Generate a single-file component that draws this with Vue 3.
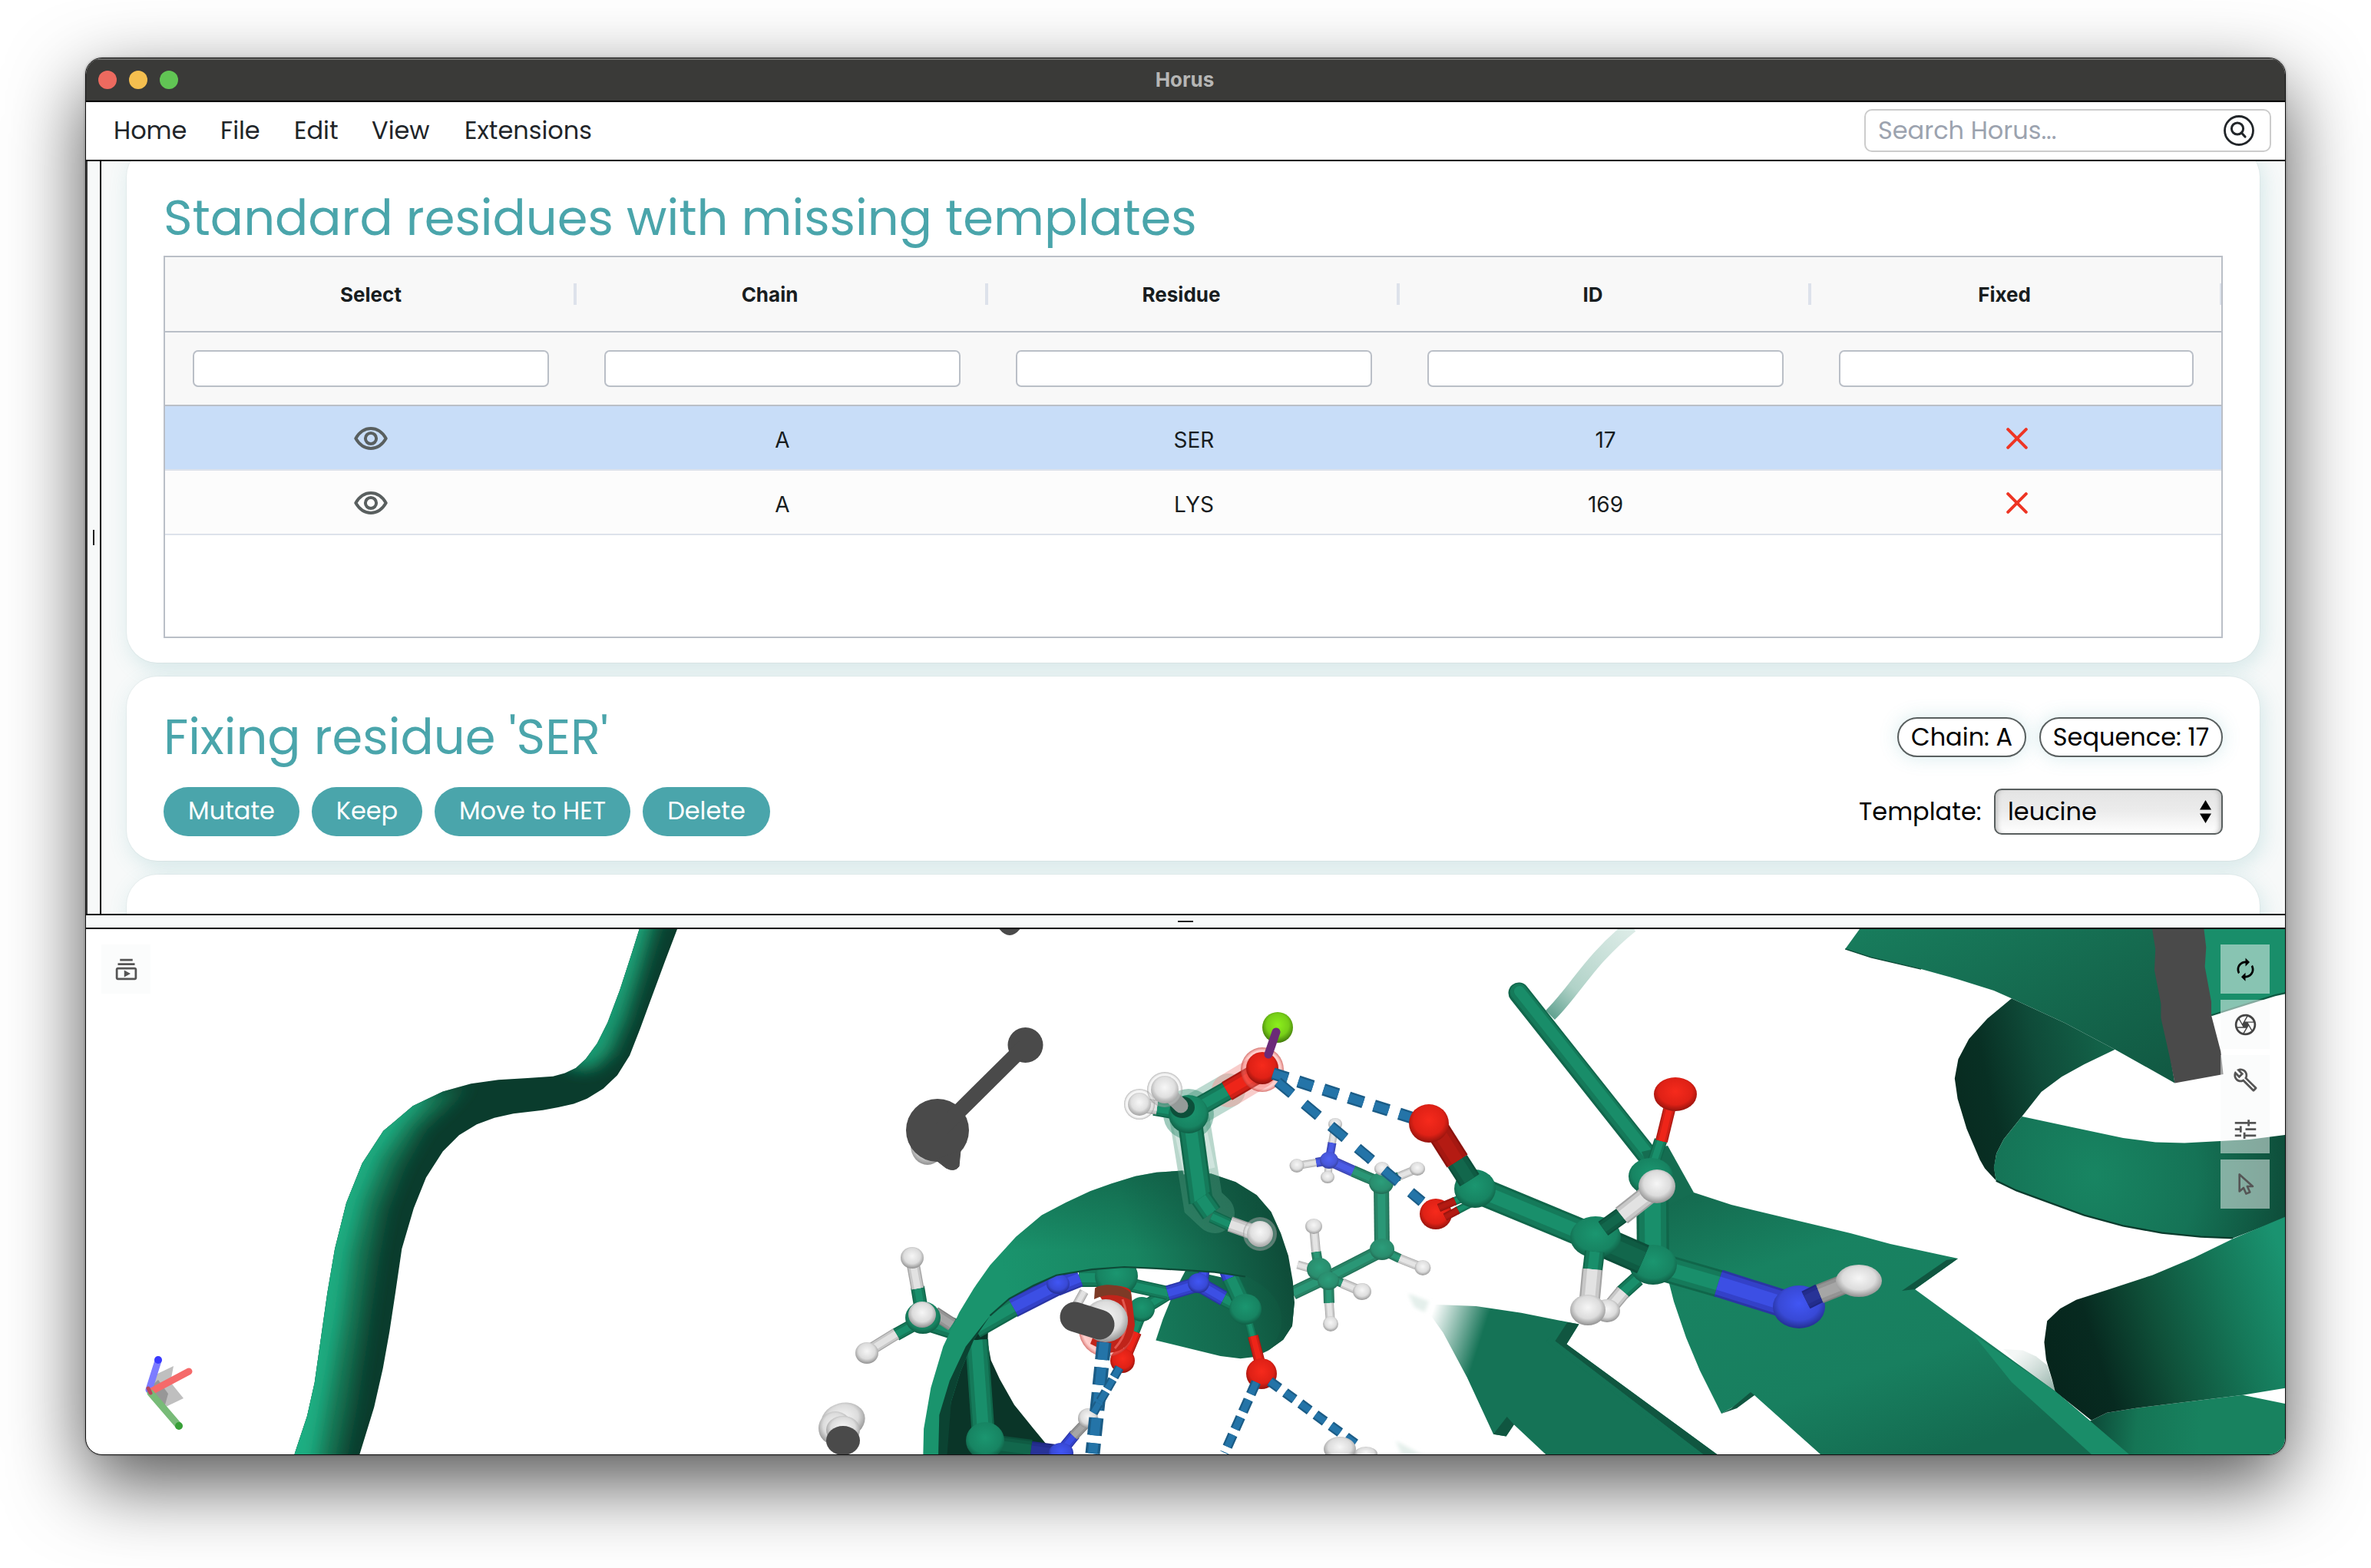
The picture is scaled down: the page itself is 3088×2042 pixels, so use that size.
<script setup>
const menu = [
  { label: 'Home', w: 93 },
  { label: 'File', w: 50 },
  { label: 'Edit', w: 55 },
  { label: 'View', w: 75 },
  { label: 'Extensions', w: 165 },
]
const columns = ['Select', 'Chain', 'Residue', 'ID', 'Fixed']
const rows = [
  { chain: 'A', residue: 'SER', id: '17', selected: true },
  { chain: 'A', residue: 'LYS', id: '169', selected: false },
]
const actions = [
  { label: 'Mutate', w: 177 },
  { label: 'Keep', w: 144 },
  { label: 'Move to HET', w: 255 },
  { label: 'Delete', w: 166 },
]

// each stick is drawn in three coats, from the dark rim to the lit middle
const coats = [1, 0.84, 0.5]
const shade = {
  g: ['#10664a', '#157a5a', '#198f6b'],
  d: ['#0c4f3a', '#0f5b43', '#12674c'],
  r: ['#a81811', '#cf2017', '#ee2519'],
  m: ['#8c130e', '#a51811', '#b41b13'],
  b: ['#2a35a4', '#3341c8', '#3c4fe4'],
  n: ['#1e277f', '#232d8c', '#283397'],
  w: ['#a4a4a4', '#c8c8c8', '#e2e2e2'],
  s: ['#808080', '#949494', '#a6a6a6'],
}

// bonds: x1, y1, x2, y2, width, colour — atoms: x, y, rx, ry, colour
const backBonds = [
  [1684, 1684, 1730, 1662, 18, 'g'], [1730, 1664, 1800, 1628, 18, 'g'], [1800, 1628, 1799, 1541, 20, 'g'],
  [1799, 1541, 1762, 1525, 15, 'g'], [1762, 1525, 1731, 1511, 15, 'b'], [1731, 1511, 1714, 1514, 12, 'b'],
  [1714, 1514, 1690, 1518, 10, 'w'], [1731, 1511, 1735, 1488, 11, 'b'], [1735, 1488, 1739, 1463, 10, 'w'],
  [1731, 1515, 1729, 1534, 10, 'w'], [1799, 1541, 1822, 1532, 12, 'g'], [1822, 1532, 1846, 1522, 11, 'w'],
  [1800, 1541, 1800, 1522, 12, 'w'], [1800, 1628, 1823, 1639, 12, 'g'], [1823, 1639, 1853, 1651, 12, 'w'],
  [1718, 1653, 1714, 1630, 13, 'g'], [1714, 1630, 1711, 1597, 12, 'w'], [1730, 1664, 1748, 1671, 12, 'g'],
  [1748, 1671, 1774, 1682, 13, 'w'], [1730, 1666, 1731, 1697, 14, 'g'], [1731, 1697, 1733, 1724, 12, 'w'],
  [1718, 1655, 1690, 1647, 11, 'w'], [1720, 1655, 1730, 1668, 22, 'g'],
]
const backAtoms = [
  [1731, 1511, 12, 11, 'b'], [1689, 1518, 9.5, 9, 'w'], [1739, 1464, 9, 8, 'w'], [1729, 1533, 9, 8, 'w'],
  [1799, 1541, 16, 14, 'g'], [1846, 1522, 10, 9, 'w'], [1800, 1522, 10, 9, 'w'], [1800, 1627, 16, 14, 'g'],
  [1853, 1651, 10.5, 10, 'w'], [1718, 1653, 16, 15, 'g'], [1730, 1668, 14, 12, 'g'], [1711, 1597, 11, 10, 'w'],
  [1774, 1682, 12, 11, 'w'], [1733, 1724, 10, 10, 'w'],
]
const innerBonds = [
  [1487, 1705, 1521, 1684, 18, 'g'], [1453, 1669, 1521, 1684, 18, 'g'], [1521, 1684, 1561, 1672, 20, 'b'],
  [1561, 1672, 1594, 1691, 20, 'b'], [1594, 1691, 1622, 1705, 20, 'g'], [1566, 1672, 1569, 1650, 14, 'b'],
  [1598, 1655, 1603, 1668, 20, 'b'], [1603, 1664, 1622, 1705, 24, 'g'], [1624, 1712, 1632, 1742, 11, 'g'],
  [1632, 1740, 1641, 1775, 14, 'r'], [1487, 1710, 1475, 1740, 14, 'g'], [1480, 1735, 1466, 1768, 14, 'r'],
  [1405, 1664, 1453, 1664, 24, 'g'], [1376, 1676, 1406, 1664, 24, 'b'], [1376, 1674, 1319, 1703, 27, 'b'],
  [1319, 1702, 1270, 1730, 27, 'g'],
  [1272, 1745, 1281, 1872, 30, 'g'], [1283, 1880, 1343, 1888, 26, 'd'], [1343, 1888, 1382, 1893, 22, 'n'],
  [1382, 1890, 1400, 1868, 15, 'b'], [1398, 1870, 1420, 1847, 14, 's'], [1412, 1682, 1402, 1700, 12, 'w'],
]
const innerAtoms = [
  [1378, 1672, 15, 13, 'b'], [1487, 1705, 17, 16, 'g'], [1561, 1671, 14, 13, 'b'], [1622, 1705, 21, 20, 'g'],
  [1643, 1789, 20, 20, 'r'], [1462, 1772, 16, 16, 'r'], [1283, 1876, 25, 24, 'g'], [1382, 1892, 16, 13, 'b'],
  [1417, 1847, 13, 13, 'w'], [1454, 1662, 28, 26, 'g'],
]
const leftBonds = [
  [1203, 1718, 1250, 1733, 28, 'g'], [1217, 1710, 1240, 1725, 18, 's'], [1201, 1712, 1195, 1676, 18, 'g'],
  [1195, 1678, 1189, 1645, 17, 'w'], [1203, 1718, 1167, 1738, 17, 'g'], [1167, 1737, 1133, 1758, 16, 'w'],
]
const leftAtoms = [
  [1202, 1716, 23, 21, 'g'], [1188, 1638, 15, 14, 'w'], [1201, 1712, 18, 17, 'w'], [1129, 1762, 15, 14, 'w'],
]
const serBonds = [
  [1546, 1450, 1599, 1420, 25, 'g'], [1598, 1421, 1644, 1394, 27, 'r'], [1549, 1455, 1564, 1566, 32, 'g'],
  [1564, 1560, 1578, 1580, 28, 'g'], [1578, 1584, 1602, 1595, 17, 'g'], [1602, 1594, 1636, 1606, 20, 'w'],
  [1546, 1450, 1503, 1443, 20, 'g'], [1507, 1442, 1484, 1439, 19, 'w'],
]
const serAtoms = [
  [1548, 1451, 26, 25, 'g'], [1644, 1391, 21, 21, 'r'], [1484, 1438, 15, 15, 'w'], [1641, 1607, 17, 17, 'w'],
]
const frontBonds = [
  [2153, 1647, 2152, 1532, 42, 'g'], [2150, 1525, 2163, 1485, 17, 'g'], [2164, 1486, 2174, 1445, 16, 'r'],
  [2133, 1665, 2112, 1684, 20, 'g'], [2114, 1682, 2094, 1706, 20, 'w'],
  [2153, 1647, 2240, 1672, 36, 'g'], [2238, 1671, 2330, 1700, 36, 'b'],
]
const frontAtoms = [
  [2150, 1532, 29, 24, 'g'], [2182, 1425, 28, 22, 'r'], [2093, 1707, 17, 15, 'w'], [2153, 1647, 31, 26, 'g'],
  [1870, 1581, 21, 20, 'r'], [2343, 1702, 34, 28, 'b'],
]
const midBonds = [
  [2078, 1613, 2140, 1640, 40, 'd'], [1921, 1548, 2078, 1613, 36, 'g'],
  [1912, 1557, 1893, 1565, 11, 'g'], [1895, 1564, 1874, 1573, 11, 'm'],
  [1916, 1567, 1897, 1577, 10, 'g'], [1899, 1576, 1882, 1585, 10, 'm'],
]
const midAtoms = [[1921, 1548, 27, 25, 'g'], [2078, 1611, 33, 27, 'g']]
const nearBonds = [
  [1914, 1537, 1898, 1512, 30, 'd'], [1898, 1512, 1872, 1471, 32, 'm'],
  [2088, 1600, 2113, 1582, 22, 'd'], [2112, 1583, 2150, 1553, 26, 'w'], [2077, 1630, 2074, 1655, 26, 'g'],
  [2074, 1653, 2070, 1696, 27, 'w'], [2352, 1693, 2370, 1684, 25, 'n'], [2370, 1685, 2405, 1671, 26, 's'],
]
const nearAtoms = [
  [1861, 1463, 26, 25, 'r'], [2158, 1545, 24, 22, 'w'], [2068, 1706, 23, 20, 'w'], [2421, 1668, 30, 21, 'w'],
]

const inner = [
  { key: 'inner', bonds: innerBonds, atoms: innerAtoms },
  { key: 'left', bonds: leftBonds, atoms: leftAtoms },
]
const front = [
  { key: 'front', bonds: frontBonds, atoms: frontAtoms },
  { key: 'mid', bonds: midBonds, atoms: midAtoms },
  { key: 'near', bonds: nearBonds, atoms: nearAtoms },
]
const dashes = [
  [1658, 1398, 1840, 1456, 16, '20 14.5'],
  [1664, 1409, 1852, 1565, 14, '24 21'],
]
const dashes2 = [
  [1438, 1748, 1423, 1893, 19, '23 10'],
  [1458, 1781, 1424, 1840, 12, '14 4'],
  [1636, 1800, 1595, 1892, 13, '17 8'],
  [1654, 1799, 1772, 1885, 13, '15 9.5'],
]
</script>

<template>
  <div class="desktop">
    <div class="window">
      <header class="titlebar">
        <div class="lights"><i class="close"></i><i class="min"></i><i class="max"></i></div>
        <span class="title">Horus</span>
      </header>

      <nav class="menubar">
        <div class="menu">
          <span v-for="m in menu" :key="m.label" class="menu-item" :style="{ width: m.w + 'px' }">{{ m.label }}</span>
        </div>
        <div class="search">
          <span>Search Horus...</span>
          <svg width="40" height="40" viewBox="0 0 40 40" fill="none" stroke="#212529" stroke-linecap="round">
            <circle cx="20" cy="20" r="18.5" stroke-width="2.8" />
            <circle cx="18" cy="17.5" r="7.6" stroke-width="3" />
            <path d="M23.3 23 28 28" stroke-width="3.200" />
          </svg>
        </div>
      </nav>

      <section class="upper">
        <div class="rail"><i></i></div>
        <div class="panel">
          <article class="card first">
            <h2>Standard residues with missing templates</h2>
            <div class="grid">
              <div class="row head">
                <div v-for="(c, i) in columns" :key="c" class="cell" :class="{ shifted: i > 0 }">
                  <span>{{ c }}</span><i class="sep"></i>
                </div>
              </div>
              <div class="row filters">
                <div v-for="c in columns" :key="c" class="cell"><div class="filter"></div></div>
              </div>
              <div v-for="r in rows" :key="r.id" class="row data" :class="{ selected: r.selected }">
                <div class="cell icon">
                  <svg width="44" height="30" viewBox="0 0 44 30" fill="none" stroke="#595f5f" stroke-width="4">
                    <path d="M2.300 15C7 7 14 2.100 22 2.100S37 7 41.700 15C37 23 30 27.900 22 27.900S7 23 2.300 15Z" stroke-linejoin="round" />
                    <circle cx="22" cy="15" r="7.100" />
                  </svg>
                </div>
                <div class="cell txt">{{ r.chain }}</div>
                <div class="cell txt">{{ r.residue }}</div>
                <div class="cell txt">{{ r.id }}</div>
                <div class="cell icon">
                  <svg width="28" height="28" viewBox="0 0 28 28" stroke="#ee3524" stroke-width="4" stroke-linecap="round">
                    <path d="M2.200 2.200 25.800 25.800M25.800 2.200 2.200 25.800" />
                  </svg>
                </div>
              </div>
            </div>
          </article>

          <article class="card second">
            <div class="line">
              <h2>Fixing residue 'SER'</h2>
              <div class="badges">
                <span class="badge chain">Chain: A</span>
                <span class="badge seq">Sequence: 17</span>
              </div>
            </div>
            <div class="line actions">
              <div class="buttons">
                <span v-for="a in actions" :key="a.label" class="btn" :style="{ width: a.w + 'px' }">{{ a.label }}</span>
              </div>
              <div class="template">
                <span class="tpl-label">Template:</span>
                <div class="select">
                  <span>leucine</span>
                  <svg width="15" height="30" viewBox="0 0 15 30"><path d="M7.500 0 15 12.500H0ZM7.500 30 0 17.500H15Z" /></svg>
                </div>
              </div>
            </div>
          </article>

          <article class="card third"></article>
        </div>
      </section>

      <div class="splitter"><i></i></div>

      <section class="viewer">
        <svg class="scene" viewBox="112 1210 2864 684" width="2864" height="684">
          <defs>
            <radialGradient id="ag" cx=".5" cy=".42" r=".6"><stop offset="0" stop-color="#1b9670" /><stop offset=".7" stop-color="#178462" /><stop offset="1" stop-color="#0f5a42" /></radialGradient>
            <radialGradient id="ar" cx=".5" cy=".42" r=".6"><stop offset="0" stop-color="#f62a1c" /><stop offset=".65" stop-color="#df2116" /><stop offset="1" stop-color="#8c120c" /></radialGradient>
            <radialGradient id="ab" cx=".5" cy=".42" r=".6"><stop offset="0" stop-color="#4156f4" /><stop offset=".65" stop-color="#3849d6" /><stop offset="1" stop-color="#212c8a" /></radialGradient>
            <radialGradient id="aw" cx=".5" cy=".42" r=".6"><stop offset="0" stop-color="#f6f6f6" /><stop offset=".6" stop-color="#dcdcdc" /><stop offset="1" stop-color="#8a8a8a" /></radialGradient>
            <radialGradient id="al" cx=".5" cy=".42" r=".6"><stop offset="0" stop-color="#8cf01c" /><stop offset=".6" stop-color="#77cf18" /><stop offset="1" stop-color="#3d720a" /></radialGradient>
            <radialGradient id="halo" cx=".5" cy=".5" r=".5"><stop offset=".6" stop-color="#fff" stop-opacity=".1" /><stop offset=".88" stop-color="#d8d8d8" stop-opacity=".35" /><stop offset="1" stop-color="#888" stop-opacity=".6" /></radialGradient>
            <radialGradient id="haloRed" cx=".5" cy=".5" r=".5"><stop offset=".5" stop-color="#ff3a30" stop-opacity=".35" /><stop offset=".85" stop-color="#ff8a84" stop-opacity=".4" /><stop offset="1" stop-color="#c53a34" stop-opacity=".7" /></radialGradient>
            <linearGradient id="topArrow" x1="0" y1="0" x2="1" y2="1"><stop offset="0" stop-color="#187d5d" /><stop offset=".5" stop-color="#156a4f" /><stop offset="1" stop-color="#115842" /></linearGradient>
            <linearGradient id="coilB" gradientUnits="userSpaceOnUse" x1="500" y1="500" x2="960" y2="390"><stop offset="0" stop-color="#082c21" /><stop offset=".2" stop-color="#083024" /><stop offset=".55" stop-color="#0f4b39" /><stop offset="1" stop-color="#136349" /></linearGradient>
            <radialGradient id="coilB2" gradientUnits="userSpaceOnUse" cx="920" cy="740" r="640"><stop offset="0" stop-color="#188562" /><stop offset=".5" stop-color="#157356" /><stop offset="1" stop-color="#0d4836" /></radialGradient>
            <linearGradient id="coilC" gradientUnits="userSpaceOnUse" x1="770" y1="1260" x2="1511" y2="1000"><stop offset="0" stop-color="#06251c" /><stop offset=".2" stop-color="#072a20" /><stop offset=".45" stop-color="#0f5039" /><stop offset=".75" stop-color="#157758" /><stop offset="1" stop-color="#1a9370" /></linearGradient>
            <linearGradient id="coilD" gradientUnits="userSpaceOnUse" x1="920" y1="1440" x2="1250" y2="1470"><stop offset="0" stop-color="#0d4d3a" /><stop offset=".4" stop-color="#157555" /><stop offset="1" stop-color="#18825f" /></linearGradient>
            <linearGradient id="bigArrow" x1="0" y1="0" x2=".6" y2="1"><stop offset="0" stop-color="#14694e" /><stop offset=".3" stop-color="#188261" /><stop offset=".7" stop-color="#187f5f" /><stop offset="1" stop-color="#146b50" /></linearGradient>
            <linearGradient id="fadeArrow" gradientUnits="userSpaceOnUse" x1="370" y1="1190" x2="500" y2="1225"><stop offset="0" stop-color="#16765a" stop-opacity="0" /><stop offset="1" stop-color="#157356" /></linearGradient>
            <linearGradient id="fadeTube" gradientUnits="userSpaceOnUse" x1="2020" y1="1320" x2="2120" y2="1210"><stop offset="0" stop-color="#4a9480" stop-opacity=".85" /><stop offset=".3" stop-color="#8fbfb0" stop-opacity=".7" /><stop offset="1" stop-color="#c4ded6" stop-opacity=".6" /></linearGradient>
            <linearGradient id="ghost" gradientUnits="userSpaceOnUse" x1="700" y1="1230" x2="790" y2="1340"><stop offset="0" stop-color="#e8efec" stop-opacity=".5" /><stop offset="1" stop-color="#9db8b0" /></linearGradient>
            <linearGradient id="helix" gradientUnits="userSpaceOnUse" x1="600" y1="1080" x2="1480" y2="850"><stop offset="0" stop-color="#1a946d" /><stop offset=".45" stop-color="#188561" /><stop offset=".75" stop-color="#136249" /><stop offset="1" stop-color="#0d4634" /></linearGradient>
            <linearGradient id="helixTop" gradientUnits="userSpaceOnUse" x1="0" y1="727" x2="0" y2="960"><stop offset="0" stop-color="#0e513c" stop-opacity=".5" /><stop offset="1" stop-color="#0e513c" stop-opacity="0" /></linearGradient>
            <linearGradient id="helixBack" gradientUnits="userSpaceOnUse" x1="1060" y1="1220" x2="1480" y2="1120"><stop offset="0" stop-color="#16795a" /><stop offset=".6" stop-color="#13674c" /><stop offset="1" stop-color="#0f523c" /></linearGradient>
            <filter id="soft" x="-30%" y="-30%" width="160%" height="160%"><feGaussianBlur stdDeviation="20" /></filter>
            <filter id="soft4" x="-30%" y="-30%" width="160%" height="160%"><feGaussianBlur stdDeviation="5" /></filter>
            <clipPath id="tubeClip"><path d="M1294 43 1276 115 1250 215 1222 308 1198 368 1172 412 1150 437 1125 452 1098 461 1040 466 974 471 912 482 848 504 780 545 713 616 665 708 629 820 603 950 586 1075 570 1215 557 1330 540 1425 511 1534H659L692 1400 712 1290 727 1185 741 1070 755 950 782 835 810 748 848 674 885 628 925 597 965 579 1008 567 1075 557 1110 549 1145 539 1176 524 1212 496 1244 458 1272 402 1296 325 1318 250 1352 135 1380 43Z" /></clipPath>
          </defs>

          <!-- loop on the left -->
          <g transform="translate(90 1190) scale(.57398 .45918)">
            <g clip-path="url(#tubeClip)">
              <rect x="480" y="40" width="920" height="1500" fill="#0a3c2d" />
              <path filter="url(#soft)" fill="#14704f" d="M1270 0 1222 308 1172 412 1140 445 1190 445 1235 400 1270 300 1300 180 1345 0ZM900 480 780 530 700 610 650 708 610 820 590 950 560 1215 480 1580H612L640 1400 665 1200 690 980 712 840 750 720 800 610 860 540Z" />
              <path filter="url(#soft)" fill="#1fae82" d="M1240 0 1200 300 1150 412 1120 440 1180 430 1215 385 1245 300 1280 160 1315 0ZM840 480 760 520 680 600 630 708 590 820 565 950 540 1215 450 1580H560L595 1330 620 1150 640 960 670 810 710 690 760 600 800 545Z" />
            </g>
          </g>

          <!-- sheets and coils on the right -->
          <path d="M2019 1322C2050 1292 2070 1250 2125 1206" fill="none" stroke="url(#fadeTube)" stroke-width="17" />
          <g transform="translate(2340 1190) scale(.42092 .45918)">
            <path fill="url(#coilB)" d="M665 240 590 297 533 355 500 412 489 467 498 525 526 610 567 698 582 722 617 757 611 720 618 680 640 640 697 575 757 505 820 462 890 427 985 385 830 310Z" />
            <path fill="url(#coilB2)" d="M697 575 850 605 1010 636 1110 648 1200 650 1400 640 1515 627V862L1350 920 1250 916 1130 905 1010 885 890 855 800 825 680 785 617 757 610 720 618 680 640 640Z" />
            <path fill="none" stroke="#0a3c2d" stroke-width="5" d="M617 757 680 785 800 825 890 855 1010 885 1130 905 1250 916 1350 920" />
            <path fill="url(#topArrow)" d="M195 43H1104L1112 100 1109 160 1130 255V295L1157 410 1170 480 985 385 830 310 665 240 610 218 500 186 385 157 230 124 150 100Z" />
            <path fill="none" stroke="#0c4a36" stroke-width="3" d="M150 100 230 124 385 157" />
            <path fill="#198e6a" d="M1258 43H1515V225L1480 232 1400 255 1283 288 1280 250 1260 150Z" />
            <path fill="none" stroke="#0f5a43" stroke-width="5" d="M1515 224 1480 231 1400 254 1283 288" />
            <path fill="#4a4a4a" d="M1100 43H1260L1267 95 1263 150 1283 250V288L1312 390 1320 455 1170 480 1155 410 1127 295V255L1107 160 1110 100Z" />
            <path fill="url(#ghost)" d="M640 1235 700 1238 740 1255 775 1280 802 1358 700 1290Z" />
            <path fill="url(#coilD)" d="M905 1440 960 1415 1050 1402 1200 1385 1380 1365 1515 1390V1540H1030Z" />
            <path fill="url(#coilC)" d="M1515 858 1350 922 1230 975 1100 1025 960 1067 865 1095 815 1120 775 1155 766 1215 772 1265 790 1320 800 1355 912 1437 960 1415 1050 1402 1200 1385 1380 1365 1515 1345Z" />
          </g>
          <path d="M1978 1293 2164 1528" stroke="#11674c" stroke-width="27" stroke-linecap="round" />
          <path d="M1978 1292 2164 1527" stroke="#157a5a" stroke-width="22" stroke-linecap="round" />
          <path d="M1979 1291 2165 1526" stroke="#198d69" stroke-width="14" stroke-linecap="round" />
          <path fill="#156d51" d="M2138 1500 2172 1492 2206 1553 2180 1600Z" />
          <path fill="url(#bigArrow)" d="M2206 1553 2255 1569 2330 1587 2410 1606 2462 1620 2550 1639 2494 1679 2677 1812 2773 1894H2371L2285 1817 2242 1841 2214 1785 2196 1742 2180 1695 2171 1660V1570Z" />
          <path fill="#1a8d69" d="M2570 1738 2677 1812 2773 1894H2724L2620 1800Z" />
          <path fill="#105640" d="M2550 1639 2494 1679 2477 1681 2535 1641ZM2285 1817 2280 1813 2255 1834 2242 1841 2262 1834Z" />
          <g transform="translate(1660 1200) scale(.53571 .44643)">
            <path fill="url(#fadeArrow)" d="M360 1116 490 1122 600 1142 740 1175 710 1233 1082 1560H664L582 1468 563 1502 532 1496 468 1330 410 1200Z" />
            <path fill="#105640" d="M740 1175 710 1233 1082 1560H1048L682 1224 712 1169ZM582 1468 563 1502 532 1496 565 1445Z" />
            <path fill="#157356" d="M670 1212 682 1224 1048 1560H1030L660 1225Z" />
            <path filter="url(#soft4)" fill="#e4efeb" d="M325 1085 375 1108 365 1140 340 1125ZM295 1515 365 1560H310Z" />
          </g>

          <!-- side chain in the distance -->
          <g opacity=".92">
            <g v-for="(b, i) in backBonds" :key="'bb' + i">
              <line v-for="(k, n) in coats" :key="n" :x1="b[0]" :y1="b[1]" :x2="b[2]" :y2="b[3]" :stroke-width="b[4] * k" :stroke="shade[b[5]][n]" />
            </g>
            <ellipse v-for="(a, i) in backAtoms" :key="'ba' + i" :cx="a[0]" :cy="a[1]" :rx="a[2]" :ry="a[3]" :fill="`url(#a${a[4]})`" />
          </g>

          <!-- helix, inner face -->
          <g transform="translate(1060 1200) scale(.42092 .44643)">
            <path fill="url(#helixBack)" d="M1150 1018 1335 1033 1400 1060 1487 1110 1480 1180 1452 1220 1405 1252 1365 1270 1320 1275 1258 1268 1058 1222 1080 1160 1110 1090Z" />
            <path fill="#0a3528" d="M385 1560 395 1450 420 1340 460 1240 540 1150 538 1230 548 1280 575 1335 620 1410 680 1480 750 1560Z" />
            <path fill="#fff" d="M1218 1018 1268 1024 1270 1040 1222 1030Z" />
          </g>

          <g v-for="l in inner" :key="l.key">
            <g v-for="(b, i) in l.bonds" :key="i">
              <line v-for="(k, n) in coats" :key="n" :x1="b[0]" :y1="b[1]" :x2="b[2]" :y2="b[3]" :stroke-width="b[4] * k" :stroke="shade[b[5]][n]" />
            </g>
            <ellipse v-for="(a, i) in l.atoms" :key="'a' + i" :cx="a[0]" :cy="a[1]" :rx="a[2]" :ry="a[3]" :fill="`url(#a${a[4]})`" />
          </g>

          <!-- helix, outer face -->
          <g transform="translate(1060 1200) scale(.42092 .44643)">
            <path fill="url(#helix)" d="M338 1560 340 1480 362 1360 400 1240 450 1140 495 1070 545 1003 625 920 705 857 780 820 855 787 920 765 995 743 1060 732 1140 727 1230 736 1305 760 1370 798 1415 847 1445 910 1468 975 1482 1050 1487 1110 1480 1180 1452 1220 1405 1252C1470 1190 1470 1090 1335 1035L1240 1022 1060 1012 960 1008 860 1015 750 1032 680 1062 605 1100 545 1150 495 1220 455 1310 425 1400 410 1480 408 1560Z" />
            <path fill="url(#helixTop)" d="M545 1003 625 920 705 857 780 820 855 787 920 765 995 743 1060 732 1140 727 1230 736 1305 760 1370 798 1415 847 1445 960H600Z" />
            <path fill="#0b4332" d="M385 1560 388 1440 420 1340 470 1240 545 1150 495 1220 455 1310 425 1400 412 1560Z" />
            <path fill="none" stroke="#0d4a37" stroke-width="5" d="M1335 1036 1240 1023 1060 1012 960 1008 860 1015 750 1032 680 1062 605 1100 545 1150" />
          </g>

          <!-- oxygen seen end-on, below the helix -->
          <ellipse cx="1441" cy="1731" rx="36" ry="36" fill="url(#haloRed)" />
          <path d="M1426 1678C1428 1672 1472 1672 1473 1682L1478 1725Q1474 1760 1444 1762L1420 1750 1440 1700Z" fill="#c0241a" />
          <path d="M1426 1678C1436 1670 1462 1672 1473 1684L1474 1694Q1450 1680 1425 1692Z" fill="#7d3a26" />
          <path d="M1462 1692Q1476 1730 1452 1756" fill="none" stroke="#e2584f" stroke-width="3" />
          <ellipse cx="1440" cy="1720" rx="29" ry="28" fill="url(#aw)" />
          <path d="M1400 1715 1432 1725" stroke="#4a4a4a" stroke-width="39" stroke-linecap="round" />

          <g v-for="(d, i) in dashes2" :key="'d2' + i" fill="none">
            <line :x1="d[0]" :y1="d[1]" :x2="d[2]" :y2="d[3]" stroke="#1b5c86" :stroke-width="d[4]" :stroke-dasharray="d[5]" />
            <line :x1="d[0]" :y1="d[1]" :x2="d[2]" :y2="d[3]" stroke="#2474a8" :stroke-width="d[4] * .65" :stroke-dasharray="d[5]" />
          </g>
          <ellipse cx="1745" cy="1887" rx="21" ry="16" fill="url(#aw)" />
          <ellipse cx="1779" cy="1893" rx="15" ry="9" fill="url(#aw)" />

          <!-- clipped dark atoms -->
          <ellipse cx="1208" cy="1492" rx="22" ry="25" fill="url(#aw)" />
          <g fill="#4a4a4a" stroke="#4a4a4a">
            <ellipse cx="1221" cy="1472" rx="41" ry="41" stroke="none" />
            <circle cx="1335.500" cy="1361" r="23" stroke="none" />
            <path d="M1226 1470 1334 1363" stroke-width="20" />
            <path d="M1218 1510 1232 1521Q1243 1527 1249 1519L1251 1498Z" />
            <path d="M1300 1208Q1315 1228 1330 1208Z" stroke="none" />
          </g>
          <ellipse cx="1098" cy="1850" rx="29" ry="23" fill="url(#aw)" transform="rotate(-15 1098 1850)" />
          <ellipse cx="1088" cy="1860" rx="22" ry="22" fill="url(#aw)" />
          <ellipse cx="1098" cy="1862" rx="22" ry="18" fill="url(#aw)" />
          <ellipse cx="1098" cy="1876" rx="22" ry="19" fill="#4a4a4a" />

          <!-- highlighted serine -->
          <g fill="none" stroke-linecap="round">
            <path d="M1548 1450 1600 1420" stroke="#7ab5a2" stroke-width="44" opacity=".5" />
            <path d="M1600 1420 1640 1396" stroke="#f29a95" stroke-width="44" opacity=".5" />
            <path d="M1549 1455 1567 1566 1582 1580" stroke="#4f9a80" stroke-width="52" opacity=".4" />
            <path d="M1549 1465 1562 1525" stroke="#e8f4ef" stroke-width="42" opacity=".5" stroke-linecap="butt" />
            <circle cx="1548" cy="1451" r="33" fill="#2b8a6a" opacity=".45" />
          </g>
          <g v-for="(b, i) in serBonds" :key="'sb' + i">
            <line v-for="(k, n) in coats" :key="n" :x1="b[0]" :y1="b[1]" :x2="b[2]" :y2="b[3]" :stroke-width="b[4] * k" :stroke="shade[b[5]][n]" />
          </g>
          <ellipse cx="1644" cy="1393" rx="28" ry="29" fill="url(#haloRed)" />
          <ellipse v-for="(a, i) in serAtoms" :key="'sa' + i" :cx="a[0]" :cy="a[1]" :rx="a[2]" :ry="a[3]" :fill="`url(#a${a[4]})`" />
          <ellipse cx="1540" cy="1442" rx="16" ry="14" fill="#0c4f3a" />
          <path d="M1520 1422 1538 1440" stroke="#959b99" stroke-width="19" stroke-linecap="round" />
          <circle cx="1484" cy="1438" r="20" fill="url(#halo)" />
          <circle cx="1517" cy="1419" r="18" fill="url(#aw)" />
          <circle cx="1517" cy="1419" r="23" fill="url(#halo)" />
          <circle cx="1641" cy="1607" r="22" fill="url(#halo)" />
          <circle cx="1664" cy="1338" r="20" fill="url(#al)" />
          <path d="M1662 1344 1652 1373" stroke="#6b2a78" stroke-width="11" stroke-linecap="round" />

          <g v-for="(d, i) in dashes" :key="'d' + i" fill="none">
            <line :x1="d[0]" :y1="d[1]" :x2="d[2]" :y2="d[3]" stroke="#1b5c86" :stroke-width="d[4]" :stroke-dasharray="d[5]" />
            <line :x1="d[0]" :y1="d[1]" :x2="d[2]" :y2="d[3]" stroke="#2474a8" :stroke-width="d[4] * .7" :stroke-dasharray="d[5]" />
          </g>

          <!-- residue in the foreground -->
          <g v-for="l in front" :key="l.key">
            <g v-for="(b, i) in l.bonds" :key="i">
              <line v-for="(k, n) in coats" :key="n" :x1="b[0]" :y1="b[1]" :x2="b[2]" :y2="b[3]" :stroke-width="b[4] * k" :stroke="shade[b[5]][n]" />
            </g>
            <ellipse v-for="(a, i) in l.atoms" :key="'a' + i" :cx="a[0]" :cy="a[1]" :rx="a[2]" :ry="a[3]" :fill="`url(#a${a[4]})`" />
          </g>

          <!-- axes -->
          <g stroke-linecap="round">
            <path d="M194 1811 203 1790 226 1779 222 1800 239 1821 214 1833Z" fill="#808080" opacity=".5" />
            <path d="M196 1806 206 1797 219 1815 214 1833 200 1822Z" fill="#707070" opacity=".5" />
            <path d="M194 1810 206 1772" stroke="#7c7cff" stroke-width="9" />
            <path d="M197 1812 246 1786" stroke="#f56a6a" stroke-width="9" />
            <path d="M196 1814 233 1857" stroke="#78bb78" stroke-width="9" />
            <circle cx="206" cy="1771" r="5" fill="#3a3aff" />
            <circle cx="233" cy="1857" r="5" fill="#38a038" />
            <path d="M193 1808 196 1814" stroke="#b8455c" stroke-width="5" />
          </g>
        </svg>

        <div class="tool-left">
          <svg width="33" height="33" viewBox="0 0 24 24" fill="#555"><path d="M20 8H4V6h16v2zm-2-6H6v2h12V2zm4 10v8c0 1.100-.9 2-2 2H4c-1.100 0-2-.9-2-2v-8c0-1.100.9-2 2-2h16c1.100 0 2 .9 2 2zm-2 0H4v8h16v-8zm-10 .730V19.270L16 16z" /></svg>
        </div>
        <div class="tools">
          <div class="tool"><svg width="33" height="33" viewBox="0 0 24 24"><path d="M12 6v3l4-4-4-4v3c-4.420 0-8 3.580-8 8 0 1.570.46 3.030 1.240 4.260L6.700 14.800c-.45-.83-.7-1.790-.7-2.800 0-3.310 2.690-6 6-6zm6.760 1.740L17.300 9.200c.44.84.7 1.790.7 2.800 0 3.310-2.690 6-6 6v-3l-4 4 4 4v-3c4.420 0 8-3.580 8-8 0-1.570-.46-3.030-1.240-4.260z" /></svg></div>
          <div class="tool">
            <svg width="33" height="33" viewBox="0 0 24 24" fill="#444"><path d="M14.250 2.260l-.08-.04-.01.02C13.460 2.090 12.740 2 12 2 6.480 2 2 6.480 2 12s4.480 10 10 10 10-4.480 10-10c0-4.750-3.310-8.720-7.750-9.740zM19.410 9h-7.990l2.710-4.700c2.400.66 4.350 2.420 5.280 4.700zM13.100 4.080L10.270 9l-1.150 2L6.400 6.300C7.840 4.880 9.820 4 12 4c.37 0 .74.030 1.100.080zM5.700 7.090L8.540 12l1.150 2H4.260C4.100 13.360 4 12.690 4 12c0-1.850.64-3.550 1.700-4.910zM4.590 15h7.980l-2.710 4.700c-2.400-.67-4.340-2.420-5.270-4.700zm6.310 4.910L14.890 13l2.720 4.700C16.160 19.120 14.180 20 12 20c-.38 0-.74-.040-1.100-.090zm7.400-3l-4-6.910h5.430c.17.640.27 1.310.27 2 0 1.850-.64 3.550-1.700 4.910z" /><circle cx="12" cy="12" r="2.800" /></svg>
          </div>
          <div class="tool tall">
            <svg width="33" height="33" viewBox="0 0 24 24" fill="#555"><path d="M22.610 18.990l-9.080-9.080c.93-2.340.45-5.100-1.440-7C9.790.610 6.210.400 3.660 2.260L7.500 6.110 6.080 7.520 2.250 3.690C.39 6.230.6 9.820 2.900 12.110c1.860 1.860 4.570 2.350 6.890 1.480l9.110 9.110c.39.39 1.020.39 1.410 0l2.300-2.300c.4-.38.4-1.010 0-1.410zm-3 1.600l-9.460-9.460c-.61.450-1.290.720-2 .820-1.360.2-2.790-.21-3.830-1.250C3.370 9.760 2.930 8.500 3 7.260l3.090 3.090 4.240-4.240-3.090-3.090c1.240-.07 2.490.37 3.440 1.310 1.080 1.080 1.490 2.570 1.240 3.960-.12.71-.42 1.370-.88 1.960l9.450 9.450-.88.890z" /></svg>
            <svg width="33" height="33" viewBox="0 0 24 24" fill="#555"><path d="M2 5h12v2H2zM16 5h6v2h-6zM14 3h2v6h-2zM2 11h6v2H2zM12 11h10v2H12zM6.500 9h2v6h-2zM2 17h6v2H2zM12 17h10v2H12zM10 15h2v6h-2z" /></svg>
          </div>
          <div class="tool">
            <svg width="33" height="33" viewBox="0 0 24 24" fill="none" stroke="#555" stroke-width="1.900" stroke-linejoin="round"><path d="M6.300 2.500v16l3.900-3.300 2.400 5.600 3.600-1.500-2.500-5.500h5.200Z" /></svg>
          </div>
        </div>
      </section>
    </div>
  </div>
</template>

<style>
html, body { margin: 0; background: #fff; }
</style>

<style scoped>
* { box-sizing: border-box; }
svg { display: block; flex: none; }
.desktop {
  width: 3088px; height: 2042px; padding: 75px 111px 0; overflow: hidden; background: #fff;
  font-family: Poppins, Inter, "Liberation Sans", sans-serif; font-size: 32px; color: #000;
}
.window {
  width: 2866px; height: 1820px; border: 1px solid #111; border-radius: 22px; overflow: hidden; background: #fff;
  display: flex; flex-direction: column;
  box-shadow: 0 0 3px rgba(0,0,0,.4), 0 36px 100px rgba(0,0,0,.68);
}
.titlebar {
  height: 57px; flex: none; background: #3a3a38; border-bottom: 2px solid #000; box-shadow: inset 0 2px #6c6c6a;
  display: grid; grid-template-columns: 1fr auto 1fr; align-items: center;
}
.lights { display: flex; gap: 16px; padding-left: 16px; }
.lights i { width: 24px; height: 24px; border-radius: 50%; }
.close { background: #ed6a5f; } .min { background: #f5bf4f; } .max { background: #61c554; }
.title { font: 700 26px Inter, sans-serif; color: #b6b6b5; margin: -1px 1px 0 -1px; }
.menubar {
  height: 77px; flex: none; border-bottom: 2px solid #000; display: flex; align-items: center; justify-content: space-between;
  padding: 0 18px 2px 36px; color: #212529;
}
.menu { display: flex; gap: 46px; }
.menu-item { white-space: nowrap; }
.search {
  width: 530px; height: 56px; border: 2px solid #ccc; border-radius: 10px; display: flex; align-items: center;
  justify-content: space-between; padding: 0 20px 0 16px; color: #9ca3af;
}
.upper { height: 980px; flex: none; display: flex; background: #f7f9f9; overflow: hidden; }
.rail { width: 20px; flex: none; border-left: 2px solid #3b3b3b; border-right: 2px solid #000; display: flex; align-items: center; justify-content: center; }
.rail i { width: 2px; height: 20px; background: #222; }
.panel { flex: 1; padding: 0 33px; display: flex; flex-direction: column; gap: 18px; overflow: hidden; }
.card {
  background: #fff; border-radius: 40px; padding: 0 48px; flex: none;
  box-shadow: 0 0 0 1px rgba(0,0,0,.03), 4px 8px 28px rgba(74,165,172,.2);
}
.first { height: 673px; margin-top: -20px; padding-top: 62px; }
.second { height: 240px; padding-top: 47px; }
.third { height: 200px; }
h2 { margin: 0; font-weight: 400; font-size: 64px; line-height: 64px; color: #4aa5ab; white-space: nowrap; }
.grid { margin-top: 17px; height: 498px; border: 2px solid #babfc7; font-family: Inter, sans-serif; overflow: hidden; }
.row { display: grid; grid-template-columns: repeat(5, 536px); width: 2680px; }
.cell { display: flex; align-items: center; justify-content: center; }
.head { height: 98px; background: #f8f8f8; border-bottom: 2px solid #babfc7; font-size: 26px; font-weight: 700; color: #181d1f; }
.head .cell { position: relative; }
.head .shifted { padding-right: 33px; }
.sep { position: absolute; right: 0; top: 34px; width: 4px; height: 28px; background: #dde2eb; }
.filters { height: 96px; background: #f8f8f8; border-bottom: 2px solid #babfc7; }
.filter { width: 464px; height: 48px; border: 2px solid #babfc7; border-radius: 7px; background: #fff; }
.filters .cell:last-child .filter { width: 462px; margin-right: 2px; }
.data { height: 84px; background: #fcfcfc; border-bottom: 2px solid #dde2eb; font-size: 28px; color: #181d1f; }
.data.selected { background: #c8ddf8; }
.txt { padding-top: 6px; }
.icon { padding-top: 2px; }
.line { display: flex; justify-content: space-between; align-items: center; height: 64px; }
.actions { margin-top: 33px; }
.badges { display: flex; gap: 17px; }
.badge {
  height: 52px; line-height: 48px; border: 2px solid #595f5f; border-radius: 27px; text-align: center; background: #fff;
  white-space: nowrap; box-shadow: 0 0 24px rgba(74,165,172,.22);
}
.chain { width: 168px; } .seq { width: 239px; }
.buttons { display: flex; gap: 16px; }
.btn { height: 64px; line-height: 62px; border-radius: 32px; background: #4aa5ab; color: #fff; text-align: center; white-space: nowrap; }
.template { display: flex; align-items: center; gap: 16px; }
.tpl-label { width: 160px; white-space: nowrap; }
.select {
  width: 298px; height: 60px; border: 2px solid #595f5f; border-radius: 10px; display: flex; align-items: center;
  justify-content: space-between; padding: 0 13px 0 16px;
  background: linear-gradient(#e4e4e4, #ececec 50%, #fff); box-shadow: inset 6px 0 6px -4px #bbb, inset -6px 0 6px -4px #bbb;
}
.splitter { height: 20px; flex: none; border-top: 2px solid #000; border-bottom: 2px solid #000; background: #f7f9f9; display: flex; align-items: center; justify-content: center; }
.splitter i { width: 20px; height: 2px; background: #222; }
.viewer { flex: 1; position: relative; overflow: hidden; }
.tool-left, .tool { background: rgba(247,249,249,.5); display: flex; align-items: center; justify-content: center; }
.tool-left { position: absolute; left: 20px; top: 20px; width: 64px; height: 64px; padding: 1px 0 0 1px; background: #fbfcfc; }
.tools { position: absolute; right: 20px; top: 20px; display: flex; flex-direction: column; gap: 8px; }
.tool { width: 64px; height: 64px; padding: 1px 0 0 1px; }
.tall { height: 128px; flex-direction: column; gap: 31px; }
</style>
